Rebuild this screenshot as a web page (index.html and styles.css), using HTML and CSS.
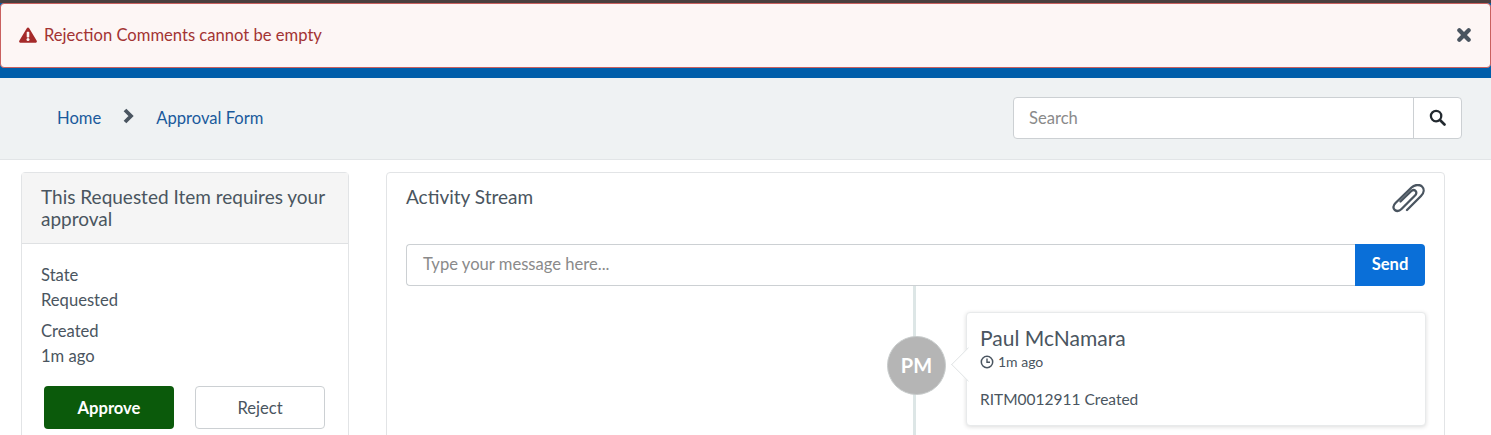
FILE: index.html
```html
<!DOCTYPE html>
<html lang="en">
<head>
    <meta charset="UTF-8">
    <title>Approval Form</title>
    <link rel="stylesheet" href="styles.css">
</head>
<body>
    <header class="top-header">
        <div class="alert">
            <svg class="alert-icon" viewBox="0 0 18 16"><path d="M9 0.5c.5 0 1 .3 1.2.7l7.5 12.6c.5.9-.1 1.9-1.2 1.9H1.5C.4 15.7-.2 14.700.3 13.800L7.800 1.200C8 .8 8.500.5 9 .5z" fill="#a52a2a"/><rect x="7.700" y="4.800" width="2.600" height="5.600" rx=".6" fill="#fdf6f5"/><circle cx="9" cy="12.600" r="1.500" fill="#fdf6f5"/></svg>
            <span class="alert-text">Rejection Comments cannot be empty</span>
            <svg class="alert-close" viewBox="0 0 12 12"><path d="M2 2l8 8M10 2l-8 8" stroke="#4a5560" stroke-width="3.600" stroke-linecap="round" fill="none"/></svg>
        </div>
    </header>

    <div class="crumb-bar">
        <nav class="crumbs">
            <a href="#">Home</a>
            <svg class="crumb-sep" viewBox="0 0 12 16"><path d="M3 2l6 6-6 6" stroke="#4a5560" stroke-width="3.800" fill="none"/></svg>
            <a href="#">Approval Form</a>
        </nav>
        <div class="search">
            <div class="search-input">Search</div>
            <div class="search-btn">
                <svg viewBox="0 0 18 18" width="17" height="17"><circle cx="7.500" cy="7.500" r="5.500" stroke="#22292f" stroke-width="2.400" fill="none"/><path d="M11.600 11.600l4.800 4.800" stroke="#22292f" stroke-width="2.800" stroke-linecap="round"/></svg>
            </div>
        </div>
    </div>

    <main class="content">
        <aside class="panel approval">
            <h2 class="panel-title">This Requested Item requires your approval</h2>
            <div class="panel-body">
                <div class="field"><div>State</div><div>Requested</div></div>
                <div class="field"><div>Created</div><div>1m ago</div></div>
                <div class="actions">
                    <button class="btn btn-approve">Approve</button>
                    <button class="btn btn-reject">Reject</button>
                </div>
            </div>
        </aside>

        <section class="panel stream">
            <div class="stream-head">
                <h2>Activity Stream</h2>
                <svg class="clip" viewBox="0 0 33 29"><path d="M15 26L29 12C32 9 32.500 5 30 2.500C27.500 .2 22.500 .5 19.500 3.500L3.500 19C1 21.500 .8 24.500 2.800 26C4.800 27.500 7 27.500 9.500 25L23 11.500C24.500 10 24.800 8 23.500 6.800C22.200 5.600 20.300 6 18.800 7.500L8.500 17.500" stroke="#4a5560" stroke-width="2.300" fill="none" stroke-linecap="round"/></svg>
            </div>
            <div class="composer">
                <div class="composer-input">Type your message here...</div>
                <button class="send">Send</button>
            </div>
            <div class="timeline">
                <div class="entry">
                    <div class="avatar">PM</div>
                    <div class="card">
                        <div class="card-name">Paul McNamara</div>
                        <div class="card-time">
                            <svg viewBox="0 0 14 14" width="14" height="14"><circle cx="7" cy="7" r="5.700" stroke="#4a5560" stroke-width="1.500" fill="none"/><path d="M7 3.500V7.300h3" stroke="#4a5560" stroke-width="1.400" fill="none"/></svg>
                            <span>1m ago</span>
                        </div>
                        <div class="card-text">RITM0012911 Created</div>
                    </div>
                </div>
            </div>
        </section>
    </main>
</body>
</html>
```

FILE: styles.css
```css
html, body {
    margin: 0;
    height: 435px;
    overflow: hidden;
}
body {
    font-family: "Lato", "Noto Sans", sans-serif;
    font-size: 16.6px;
    color: #4a5560;
    background: white;
}
.top-header {
    height: 75px;
    padding-top: 3px;
    background: #005eaa;
    box-shadow: inset 0 3px 0 #4a3f3f;
}
.alert {
    height: 65px;
    box-sizing: border-box;
    display: flex;
    align-items: center;
    padding: 0 19px 2px 18px;
    background: #fdf6f5;
    border: 1px solid #c9605f;
    border-radius: 4px;
}
.alert-icon { width: 18px; height: 16px; margin-right: 7px; }
.alert-text { color: #a33333; flex: 1; }
.alert-close { width: 14px; height: 14px; }
.crumb-bar {
    height: 79px;
    display: flex;
    align-items: center;
    justify-content: space-between;
    padding: 0 29px 2px 57px;
    background: #eff2f3;
    border-bottom: 1px solid #e2e5e7;
}
.crumbs { display: flex; align-items: center; }
.crumbs a { color: #1a5a9c; text-decoration: none; }
.crumb-sep { width: 12px; height: 16px; margin: 0 22px 3px 21px; }
.search {
    display: flex;
    width: 447px;
    height: 40px;
    background: white;
    border: 1px solid #ccd0d3;
    border-radius: 4px;
}
.search-input {
    flex: 1;
    padding-left: 15px;
    line-height: 40px;
    color: #8a8a8a;
}
.search-btn {
    width: 47px;
    display: flex;
    align-items: center;
    justify-content: center;
    border-left: 1px solid #ccd0d3;
}
.content {
    display: flex;
    align-items: flex-start;
    padding: 12px 46px 0 21px;
    gap: 37px;
}
.panel {
    background: white;
    border: 1px solid #e2e4e6;
    border-radius: 4px;
    box-sizing: border-box;
    height: 320px;
}
.approval { width: 328px; flex: none; }
.panel-title {
    margin: 0;
    padding: 13px 19px 13px;
    font-size: 19px;
    font-weight: 400;
    line-height: 22px;
    background: #f5f5f5;
    border-bottom: 1px solid #dfe1e3;
}
.panel-body { padding: 19px 19px 0; }
.field { line-height: 25px; margin-bottom: 6px; }
.actions { display: flex; gap: 21px; padding: 11px 4px 0 3px; }
.btn {
    width: 130px;
    height: 43px;
    font: inherit;
    border-radius: 4px;
    cursor: pointer;
}
.btn-approve { background: #0b5a0b; color: white; border: none; font-weight: 700; }
.btn-reject { background: white; color: #4a5560; border: 1px solid #ccd0d3; }
.stream { flex: 1; padding: 12px 19px 0; }
.stream-head {
    display: flex;
    justify-content: space-between;
    align-items: flex-start;
    height: 59px;
}
.stream-head h2 { margin: 0; font-size: 19px; font-weight: 400; line-height: 24px; }
.clip { width: 33px; height: 29px; margin-top: -1px; }
.composer { display: flex; height: 42px; }
.composer-input {
    flex: 1;
    padding-left: 16px;
    line-height: 38px;
    color: #8a8a8a;
    border: 1px solid #ccd0d3;
    border-right: 0;
    border-radius: 4px 0 0 4px;
}
.send {
    width: 70px;
    padding: 0 0 3px;
    font: inherit;
    font-weight: 700;
    color: white;
    background: #0a6fd8;
    border: none;
    border-radius: 0 4px 4px 0;
}
.timeline {
    padding: 26px 0 0 560px;
    background: linear-gradient(#dde6e6, #dde6e6) 507px 0 / 3px 100% no-repeat;
    height: 160px;
}
.entry { display: flex; align-items: center; margin-right: -1px; }
.avatar {
    flex: none;
    width: 59px;
    height: 59px;
    margin: -8px 0 0 -79px;
    border-radius: 50%;
    background: #b5b5b5;
    border: 1px solid #c8cccc;
    box-sizing: border-box;
    color: white;
    font-size: 20px;
    font-weight: 700;
    line-height: 57px;
    text-align: center;
}
.card {
    position: relative;
    flex: 1;
    margin-left: 20px;
    padding: 12px 13px 15px;
    height: 114px;
    box-sizing: border-box;
    background: white;
    border: 1px solid #e8eaeb;
    border-radius: 4px;
    box-shadow: 0 1px 4px rgba(0,0,0,.14);
}
/* notch pointing at the avatar, clipped so it stays off the card text */
.card::before {
    content: "";
    position: absolute;
    left: -11px;
    top: 39px;
    width: 25px;
    height: 25px;
    background: white;
    border-left: 1px solid #e3e6e7;
    border-bottom: 1px solid #e3e6e7;
    box-sizing: border-box;
    transform: rotate(45deg);
    clip-path: polygon(0 0, 0 100%, 100% 100%);
}
.card-name { font-size: 21px; line-height: 26px; }
.card-time { display: flex; align-items: center; gap: 4px; font-size: 14px; line-height: 20px; margin-top: 1px; }
.card-text { margin-top: 16px; font-size: 15.500px; line-height: 22px; }
```
